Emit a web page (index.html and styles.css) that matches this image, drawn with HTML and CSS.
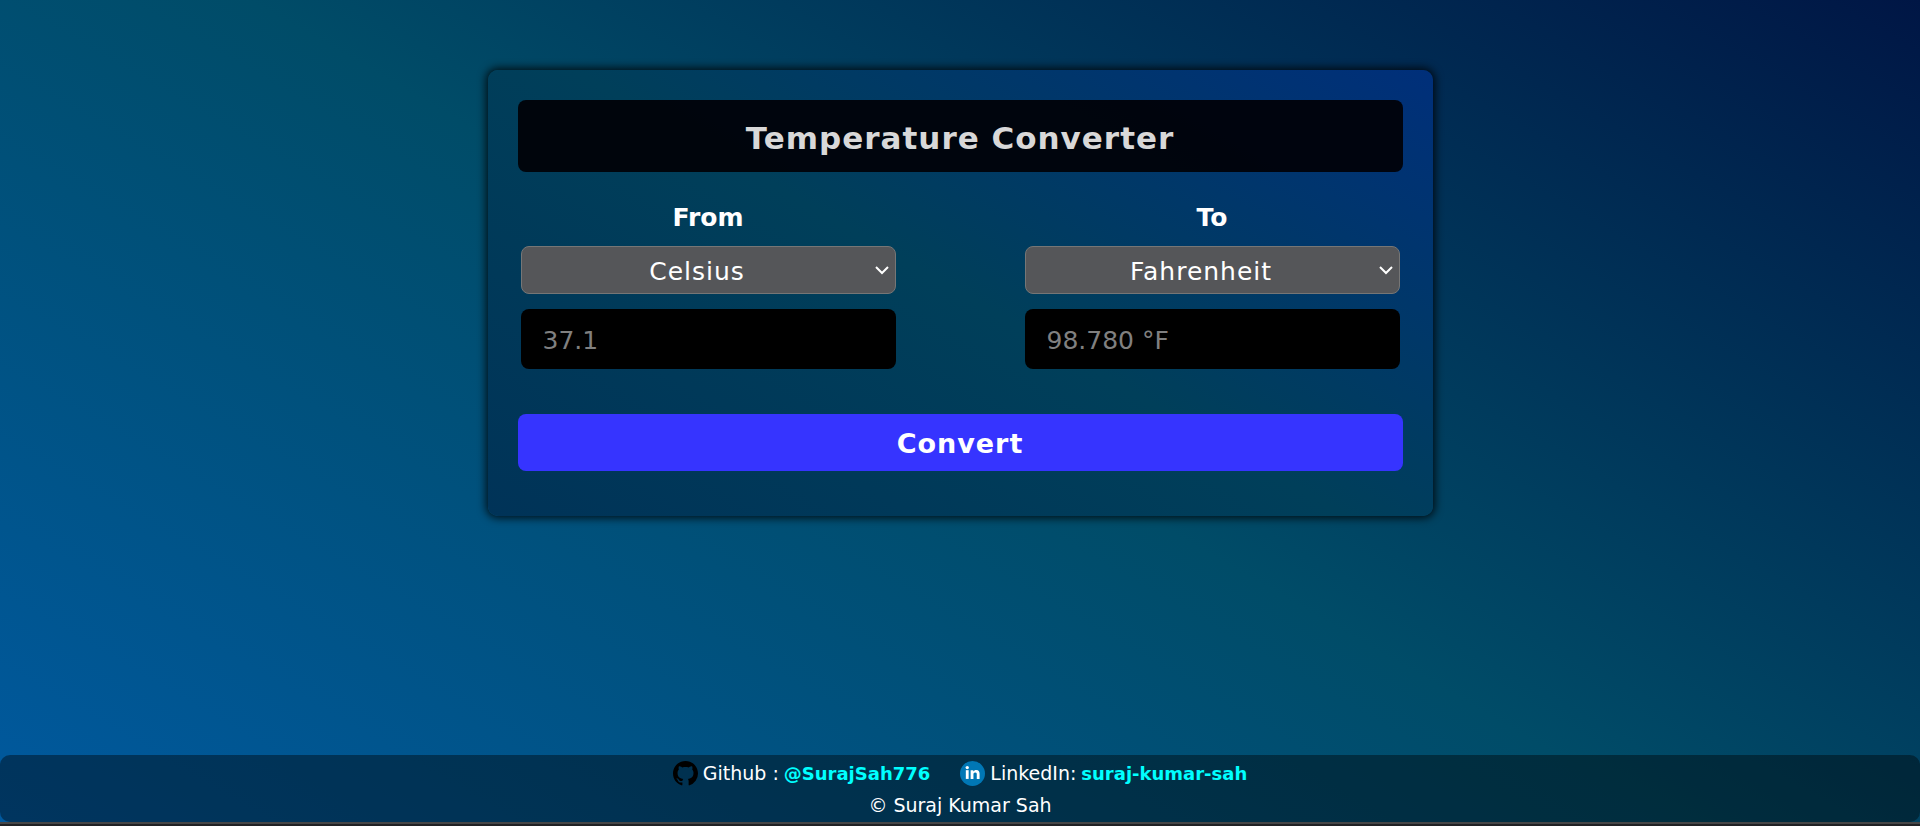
FILE: index.html
```html
<!DOCTYPE html>
<html lang="en">
<head>
  <meta charset="utf-8">
  <meta name="viewport" content="width=device-width, initial-scale=1">
  <title>Temperature Converter</title>
  <link rel="stylesheet" href="styles.css">
</head>
<body>
  <div class="page">
    <main class="main">
      <form class="card">
        <h1 class="title">Temperature Converter</h1>
        <div class="fields">
          <div class="field">
            <label class="label" for="from-unit">From</label>
            <select class="unit" id="from-unit">
              <option selected>Celsius</option>
              <option>Fahrenheit</option>
              <option>Kelvin</option>
            </select>
            <input class="value" type="text" placeholder="37.1" aria-label="Value to convert">
          </div>
          <div class="field">
            <label class="label" for="to-unit">To</label>
            <select class="unit" id="to-unit">
              <option>Celsius</option>
              <option selected>Fahrenheit</option>
              <option>Kelvin</option>
            </select>
            <input class="value" type="text" placeholder="98.780 °F" aria-label="Converted value" readonly>
          </div>
        </div>
        <button class="convert" type="button">Convert</button>
      </form>
    </main>
    <footer class="footer">
      <div class="links">
        <div class="contact">
          <svg class="icon" viewBox="0 0 16 16" aria-hidden="true">
            <path fill="#000" d="M8 0C3.58 0 0 3.58 0 8c0 3.54 2.29 6.53 5.47 7.59.4.07.55-.17.55-.38 0-.19-.01-.82-.01-1.49-2.01.37-2.53-.49-2.69-.94-.09-.23-.48-.94-.82-1.13-.28-.15-.68-.52-.01-.53.63-.01 1.08.58 1.23.82.72 1.21 1.87.87 2.33.66.07-.52.28-.87.51-1.07-1.78-.2-3.64-.89-3.64-3.95 0-.87.31-1.59.82-2.15-.08-.2-.36-1.02.08-2.12 0 0 .67-.21 2.2.82.64-.18 1.32-.27 2-.27s1.36.09 2 .27c1.53-1.04 2.2-.82 2.2-.82.44 1.1.16 1.92.08 2.12.51.56.82 1.27.82 2.15 0 3.07-1.87 3.75-3.65 3.95.29.25.54.73.54 1.48 0 1.07-.01 1.93-.01 2.2 0 .21.15.46.55.38A8.01 8.01 0 0 0 16 8c0-4.42-3.58-8-8-8z"/>
          </svg>
          <span>Github :</span>
          <a class="link" href="#github">@SurajSah776</a>
        </div>
        <div class="contact">
          <svg class="icon" viewBox="0 0 24 24" aria-hidden="true">
            <circle cx="12" cy="12" r="12" fill="#0077b5"/>
            <rect x="5.6" y="8.8" width="2.7" height="8.4" fill="#fff"/>
            <circle cx="6.95" cy="6.3" r="1.6" fill="#fff"/>
            <path fill="#fff" d="M10.2 8.8h2.6v1.2c.5-.8 1.5-1.4 2.8-1.4 2.6 0 3.2 1.6 3.2 3.9v4.7h-2.7V13c0-1.1-.2-2-1.5-2s-1.7.9-1.7 2v4.2h-2.7z"/>
          </svg>
          <span>LinkedIn:</span>
          <a class="link" href="#linkedin">suraj-kumar-sah</a>
        </div>
      </div>
      <p class="copyright">© Suraj Kumar Sah</p>
    </footer>
  </div>
  <div class="edge"></div>
</body>
</html>
```
FILE: styles.css
```css
* {
  box-sizing: border-box;
}

body {
  margin: 0;
  min-height: 100vh;
  display: flex;
  flex-direction: column;
  font-family: Verdana, "DejaVu Sans", sans-serif;
  color: #fff;
}

.page {
  flex: 1;
  display: flex;
  flex-direction: column;
  background: linear-gradient(30deg, #00599f, #004c68, #001645);
}

.main {
  flex: 1;
  padding: 70px 20px 20px;
}

.card {
  max-width: 945px;
  margin: 0 auto;
  padding: 30px 30px 45px;
  border-radius: 10px;
  background: linear-gradient(30deg, #003358, #003f5a, #002f7a);
  box-shadow: 0 0 8px 2px rgba(0, 0, 0, 0.8);
}

.title {
  margin: 0;
  padding: 18px 16px 14px;
  border-radius: 8px;
  background: rgba(0, 2, 8, 0.95);
  color: #d8d8d8;
  font-size: 31px;
  line-height: 40px;
  letter-spacing: 1px;
  text-align: center;
}

.fields {
  display: grid;
  grid-template-columns: 1fr 1fr;
  gap: 129px;
  padding: 31px 3px 45px;
}

.field {
  display: flex;
  flex-direction: column;
}

.label {
  margin-bottom: 13px;
  font-size: 25px;
  font-weight: bold;
  line-height: 30px;
  text-align: center;
}

.unit {
  appearance: none;
  width: 100%;
  height: 48px;
  margin-bottom: 15px;
  padding: 2px 22px 0 0;
  border: 1px solid #767676;
  border-radius: 8px;
  background: #555659 url("data:image/svg+xml,%3Csvg xmlns='http://www.w3.org/2000/svg' width='14' height='9' viewBox='0 0 14 9'%3E%3Cpath d='M1 1l6 6 6-6' fill='none' stroke='white' stroke-width='2'/%3E%3C/svg%3E") no-repeat right 6px center;
  color: #fff;
  font-family: inherit;
  font-size: 25px;
  letter-spacing: 1px;
  text-align: center;
}

.value {
  width: 100%;
  height: 60px;
  padding: 2px 22px 0;
  border: 0;
  border-radius: 8px;
  background: #000;
  color: #fff;
  font-family: inherit;
  font-size: 25px;
}

.value::placeholder {
  color: #808080;
}

.convert {
  display: block;
  width: 100%;
  height: 57px;
  padding: 2px 0 0;
  border: 0;
  border-radius: 8px;
  background: #3634ff;
  color: #fff;
  font-family: inherit;
  font-size: 27px;
  font-weight: bold;
  letter-spacing: 1px;
}

.footer {
  padding: 6px 0 4px;
  border-radius: 10px;
  background: rgba(0, 0, 0, 0.4);
  font-size: 19px;
  line-height: 25px;
}

.links {
  display: flex;
  justify-content: center;
  gap: 30px;
}

.contact {
  display: flex;
  align-items: center;
  gap: 5px;
}

.icon {
  width: 25px;
  height: 25px;
}

.link {
  color: #0ff;
  font-size: 18px;
  font-weight: bold;
  text-decoration: none;
}

.copyright {
  margin: 7px 0 0;
  text-align: center;
}

.edge {
  height: 4px;
  border-top: 2px solid #464646;
  background: #202124;
}
```
